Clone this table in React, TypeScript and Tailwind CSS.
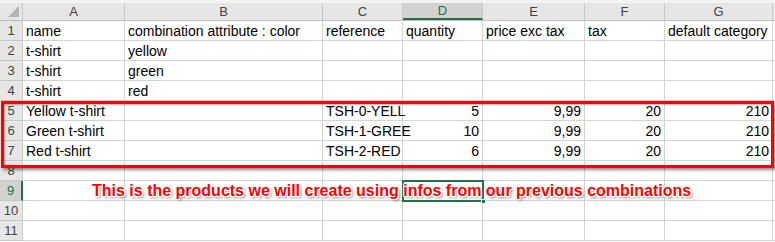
const cols = ["A", "B", "C", "D", "E", "F", "G"];
const widths = ["w-[102px]", "w-[198px]", "w-[80px]", "w-[80px]", "w-[102px]", "w-[80px]", "w-[108px]"];

type Cell = { v: string; right?: boolean };

const rows: Cell[][] = [
  [{ v: "name" }, { v: "combination attribute : color" }, { v: "reference" }, { v: "quantity" }, { v: "price exc tax" }, { v: "tax" }, { v: "default category" }],
  [{ v: "t-shirt" }, { v: "yellow" }, { v: "" }, { v: "" }, { v: "" }, { v: "" }, { v: "" }],
  [{ v: "t-shirt" }, { v: "green" }, { v: "" }, { v: "" }, { v: "" }, { v: "" }, { v: "" }],
  [{ v: "t-shirt" }, { v: "red" }, { v: "" }, { v: "" }, { v: "" }, { v: "" }, { v: "" }],
  [{ v: "Yellow t-shirt" }, { v: "" }, { v: "TSH-0-YELL" }, { v: "5", right: true }, { v: "9,99", right: true }, { v: "20", right: true }, { v: "210", right: true }],
  [{ v: "Green t-shirt" }, { v: "" }, { v: "TSH-1-GREE" }, { v: "10", right: true }, { v: "9,99", right: true }, { v: "20", right: true }, { v: "210", right: true }],
  [{ v: "Red t-shirt" }, { v: "" }, { v: "TSH-2-RED" }, { v: "6", right: true }, { v: "9,99", right: true }, { v: "20", right: true }, { v: "210", right: true }],
  [{ v: "" }, { v: "" }, { v: "" }, { v: "" }, { v: "" }, { v: "" }, { v: "" }],
  [{ v: "" }, { v: "" }, { v: "" }, { v: "" }, { v: "" }, { v: "" }, { v: "" }],
  [{ v: "" }, { v: "" }, { v: "" }, { v: "" }, { v: "" }, { v: "" }, { v: "" }],
  [{ v: "" }, { v: "" }, { v: "" }, { v: "" }, { v: "" }, { v: "" }, { v: "" }],
];

export default function App() {
  return (
    <div className="relative w-[775px] h-[242px] overflow-hidden bg-white font-['Liberation_Sans',Arial,sans-serif] text-[14px] text-black">
      {/* top strip */}
      <div className="h-[3px] bg-[#f3f3f3]" />

      {/* column headers */}
      <div className="flex h-[18px] bg-[#e6e6e6] border-b border-[#bfbfbf]">
        <div className="relative w-[23px] shrink-0 border-r border-[#c8c8c8]">
          <div className="absolute right-[3px] bottom-[3px] w-0 h-0 border-l-[11px] border-l-transparent border-b-[11px] border-b-[#b5b5b5]" />
        </div>
        {cols.map((c, i) => (
          <div
            key={c}
            className={`${widths[i]} shrink-0 flex items-center justify-center border-r border-[#c8c8c8] text-[13px] ${
              c === "D" ? "bg-[#d2d2d2] text-[#217346] border-b-2 border-b-[#217346]" : "text-[#444]"
            }`}
          >
            {c}
          </div>
        ))}
      </div>

      {/* rows */}
      {rows.map((r, ri) => (
        <div key={ri} className="flex h-[20px] border-b border-[#d4d4d4]">
          <div
            className={`w-[23px] shrink-0 flex items-center justify-center text-[13px] border-b border-[#c8c8c8] -mb-px ${
              ri === 8
                ? "bg-[#d2d2d2] text-[#217346] border-r-2 border-r-[#217346]"
                : "bg-[#e6e6e6] text-[#444] border-r border-[#bfbfbf]"
            }`}
          >
            {ri + 1}
          </div>
          {r.map((cell, ci) => (
            <div
              key={ci}
              className={`${widths[ci]} shrink-0 border-r border-[#d4d4d4] flex items-center whitespace-nowrap overflow-visible leading-none ${
                cell.right ? "justify-end pr-[3px]" : "pl-[3px]"
              }`}
            >
              {cell.v}
            </div>
          ))}
        </div>
      ))}

      {/* selected cell D9 */}
      <div className="absolute left-[402px] top-[180px] w-[82px] h-[22px] border-2 border-[#217346]">
        <div className="absolute -right-[4px] -bottom-[4px] w-[5px] h-[5px] bg-[#217346] border border-white" />
      </div>

      {/* red highlight box */}
      <div className="absolute left-[1px] top-[101px] w-[773px] h-[67px] border-[3px] border-[#ff0000] shadow-[2px_2px_3px_rgba(0,0,0,0.45),inset_1px_1px_2px_rgba(0,0,0,0.3)]" />

      {/* annotation */}
      <div className="absolute left-[92px] top-[181px] whitespace-nowrap font-bold text-[16px] leading-[20px] text-[#ff0000] [text-shadow:1px_0_0_#fff,-1px_0_0_#fff,0_1px_0_#fff,0_-1px_0_#fff,1px_1px_0_#fff,-1px_-1px_0_#fff,1px_-1px_0_#fff,-1px_1px_0_#fff,2px_2px_3px_#777]">
        This is the products we will create using infos from our previous combinations
      </div>
    </div>
  );
}
